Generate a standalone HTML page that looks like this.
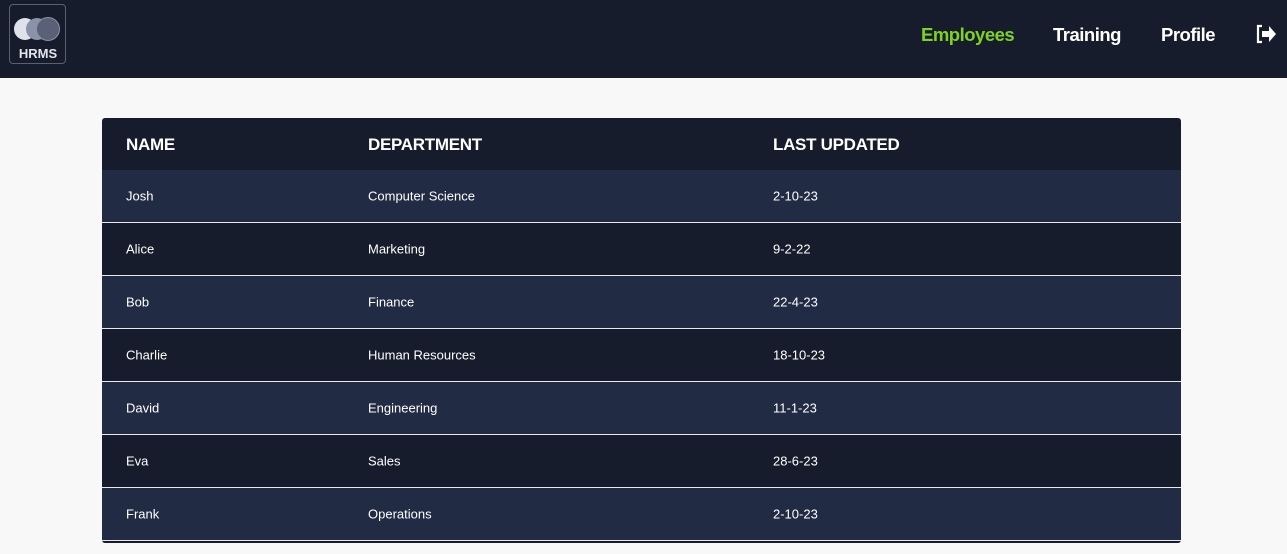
<!DOCTYPE html>
<html><head><meta charset="utf-8"><style>
*{margin:0;padding:0;box-sizing:border-box}
body{width:1287px;height:554px;background:#f8f8f8;font-family:"Liberation Sans",sans-serif;overflow:hidden;position:relative}
.nav{position:absolute;left:0;top:0;width:1287px;height:78px;background:#161c2b}
.logo{position:absolute;left:9px;top:4px;width:57px;height:60px;border:1px solid #5a6070;border-radius:4px}
.nav a{position:absolute;top:24px;font-size:18.5px;font-weight:bold;color:#fff;text-decoration:none;letter-spacing:-0.5px}
.tbl{position:absolute;left:102px;top:118px;width:1079px;height:425px;background:#161c2b;border-radius:3px;overflow:hidden}
.hd{height:52px;position:relative;color:#fff;font-weight:bold;font-size:17px;letter-spacing:-0.3px}
.row{height:53px;position:relative;color:#fff;font-size:13px;border-bottom:1px solid #e8e8e8}
.odd{background:#222b44}
.c{position:absolute;top:50%;transform:translateY(-50%)}
.hd .c{top:27px}
.c1{left:24px}.c2{left:266px}.c3{left:671px}
</style></head><body>
<div class="nav">
 <div class="logo">
  <svg width="57" height="60" viewBox="0 0 57 60">
   <circle cx="15" cy="24" r="11" fill="#dfe2ea"/>
   <circle cx="27" cy="24" r="11" fill="#8a92aa"/>
   <circle cx="38" cy="24" r="11.5" fill="#5a6075" stroke="#8a92aa" stroke-width="1"/>
   <text x="28" y="53" text-anchor="middle" fill="#e4e6ec" font-family="Liberation Sans" font-weight="bold" font-size="13">HRMS</text>
  </svg>
 </div>
 <a style="left:921px;color:#7ed321">Employees</a>
 <a style="left:1053px">Training</a>
 <a style="left:1161px">Profile</a>
 <svg style="position:absolute;left:1255px;top:24px" width="22" height="20" viewBox="0 0 22 20">
  <path d="M7 2H3v16h4" fill="none" stroke="#fff" stroke-width="2.2"/>
  <path d="M7 7h7V2l7 8-7 8v-5H7z" fill="#fff"/>
 </svg>
</div>
<div class="tbl">
 <div class="hd"><span class="c c1">NAME</span><span class="c c2">DEPARTMENT</span><span class="c c3">LAST UPDATED</span></div>
 <div class="row odd"><span class="c c1">Josh</span><span class="c c2">Computer Science</span><span class="c c3">2-10-23</span></div>
 <div class="row"><span class="c c1">Alice</span><span class="c c2">Marketing</span><span class="c c3">9-2-22</span></div>
 <div class="row odd"><span class="c c1">Bob</span><span class="c c2">Finance</span><span class="c c3">22-4-23</span></div>
 <div class="row"><span class="c c1">Charlie</span><span class="c c2">Human Resources</span><span class="c c3">18-10-23</span></div>
 <div class="row odd"><span class="c c1">David</span><span class="c c2">Engineering</span><span class="c c3">11-1-23</span></div>
 <div class="row"><span class="c c1">Eva</span><span class="c c2">Sales</span><span class="c c3">28-6-23</span></div>
 <div class="row odd"><span class="c c1">Frank</span><span class="c c2">Operations</span><span class="c c3">2-10-23</span></div>
</div>
</body></html>
